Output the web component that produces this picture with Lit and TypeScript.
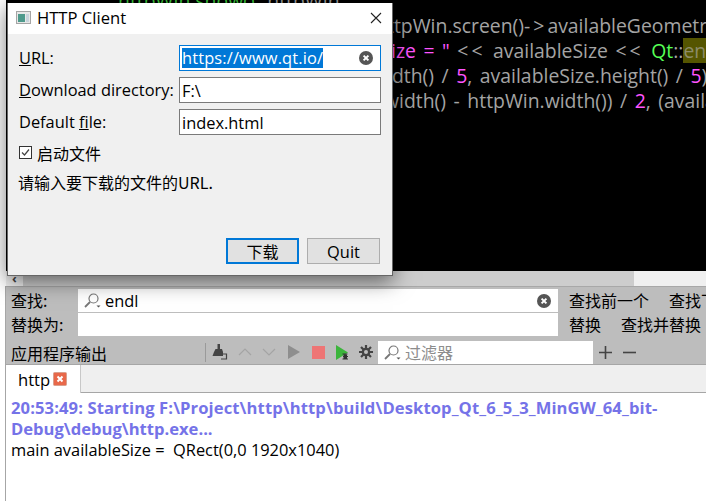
import { LitElement, html, css } from "lit";
import { customElement } from "lit/decorators.js";

const clearIcon = (size: number) => html`<svg width=${size} height=${size} viewBox="0 0 14 14"><circle cx="7" cy="7" r="7" fill="#555"/><path d="M4.6 4.6l4.8 4.8M9.4 4.6l-4.8 4.8" stroke="#fff" stroke-width="2"/></svg>`;
const searchIcon = html`<svg width="17" height="15" viewBox="0 0 17 15" fill="none"><circle cx="9.500" cy="5.500" r="4.500" stroke="#777" stroke-width="1.200"/><path d="M6 9L1 14" stroke="#777" stroke-width="1.800"/><path d="M12.500 12.500h4l-2 2z" fill="#555"/></svg>`;

@customElement("app-root")
export class AppRoot extends LitElement {
  static styles = css`
    :host { display: block; width: 706px; height: 501px; position: relative; overflow: hidden; background: #fff;
      font-family: "Open Sans", "Noto Sans CJK SC", sans-serif; font-size: 16.4px; color: #000; }
    .main { margin-left: 6px; display: flex; flex-direction: column; height: 501px; }
    .cjk { font-family: "Noto Sans CJK SC", sans-serif; font-size: 16px; }

    .editor { height: 271px; flex: none; background: #000; overflow: hidden; color: #a4a4a4; font-size: 19.4px; white-space: nowrap; word-spacing: 2.5px; }
    .line { height: 25px; line-height: 25px; }
    .l0 { margin-top: -12px; padding-left: 112px; }
    .l0 b { color: #3fd03f; font-weight: 400; }
    .l1 { padding-left: 381px; }
    .l2 { padding-left: 385px; }
    .l3 { padding-left: 381px; }
    .l4 { padding-left: 378px; }
    .op { letter-spacing: 3px; }
    .pink { color: #ff55ff; }
    .green { color: #55ff55; }
    .hl { background: #555500; color: #8c8c6a; display: inline-block; height: 25px; }

    .hscroll { height: 15px; flex: none; background: #cdcdcd; display: flex; }
    .hscroll .btn { width: 17px; background: #f0f0f0; font-size: 13px; line-height: 14px; text-align: center; font-weight: 700; color: #444; }
    .hscroll .rest { margin-left: auto; width: 72px; background: #f0f0f0; }

    .find { height: 54px; flex: none; background: #bdbdbd; border-top: 1px solid #a8a8a8; display: grid; grid-template-columns: 72px 480px 1fr; grid-template-rows: 24px 24px; padding-top: 2px; box-sizing: border-box; }
    .lbl { padding-left: 5px; line-height: 23px; white-space: nowrap; }
    .finput { background: #fff; border-bottom: 1px solid #bdbdbd; display: flex; align-items: center; padding: 0 6px; gap: 4px; }
    .finput .clr { margin-left: auto; margin-right: 1px; display: flex; }
    .ops { display: flex; line-height: 23px; padding-left: 11px; gap: 20px; white-space: nowrap; overflow: hidden; }

    .toolbar { height: 25px; flex: none; background: #bdbdbd; border-bottom: 1px solid #a6a6a6; box-sizing: border-box; display: flex; align-items: center; }
    .toolbar .title { width: 199px; padding: 1px 0 0 5px; box-sizing: border-box; white-space: nowrap; }
    .sep { width: 1px; height: 19px; background: #9a9a9a; }
    .tbi { display: flex; width: 24.5px; justify-content: center; align-items: center; flex: none; }
    .tbi.first { margin-left: 2px; }
    .tbi.gear { width: 22px; margin-right: 1px; }
    .filter { background: #fff; width: 215px; height: 23px; display: flex; align-items: center; gap: 4px; padding-left: 6px; box-sizing: border-box; color: #8d8d8d; flex: none; }
    .pm { display: flex; gap: 11px; margin-left: 6px; }

    .tabs { height: 28px; flex: none; background: #efefef; border-bottom: 1px solid #a6a6a6; box-sizing: border-box; display: flex; }
    .tab { width: 75px; height: 28px; background: #fff; border-right: 1px solid #c8c8c8; box-sizing: border-box; display: flex; align-items: center; padding-left: 12px; gap: 3px; font-size: 16.6px; }

    .out { flex: 1; padding: 4px 0 0 5px; line-height: 21px; font-size: 16.4px; white-space: pre; }
    .out .sys { color: #7573e8; font-weight: 700; font-size: 16.6px; }
    .out .wide { letter-spacing: .1px; }

    .rail { position: absolute; left: 5px; top: 286px; bottom: 0; width: 1px; background: #a6a6a6; }

    .win { position: absolute; left: 7px; top: 3px; width: 386px; height: 273px; box-sizing: border-box; background: #f0f0f0; border: 1px solid #666; border-top: 0; box-shadow: 0 5px 20px rgba(0,0,0,.55); display: flex; flex-direction: column; }
    .tb { height: 31px; padding-bottom: 2px; box-sizing: border-box; background: #fff; flex: none; display: flex; align-items: center; padding-left: 8px; gap: 6px; font-size: 16.6px; }
    .tb .x { margin-left: auto; margin-right: 10px; display: flex; }
    .form { padding: 11px 10px 0 11px; display: grid; grid-template-columns: 160px 202px; row-gap: 6px; }
    .form label { line-height: 26px; white-space: nowrap; }
    .field { height: 26px; box-sizing: border-box; background: #fff; border: 1px solid #7a7a7a; display: flex; align-items: center; padding-left: 2px; }
    .field.focus { border-color: #0078d7; padding-right: 7px; }
    .sel { background: #0078d7; color: #fff; line-height: 20px; height: 20px; letter-spacing: .15px; }
    .field .clr { margin-left: auto; display: flex; }
    .check { display: flex; align-items: center; gap: 5px; margin: 9px 0 0 11px; height: 17px; }
    .box { width: 13px; height: 13px; border: 1px solid #333; box-sizing: border-box; background: #fff; display: flex; }
    .hint { margin: 10px 0 0 10px; line-height: 22px; }
    .btns { margin-top: auto; display: flex; justify-content: flex-end; gap: 8px; padding: 0 12px 11px 0; }
    .b { width: 73px; height: 26px; box-sizing: border-box; background: #e1e1e1; border: 1px solid #adadad; display: flex; align-items: center; justify-content: center; }
    .b.def { border: 2px solid #0078d7; }
  `;

  render() {
    return html`
      <div class="main">
        <div class="editor">
          <div class="line l0"><b>httpWin.show();</b> httpWin</div>
          <div class="line l1">ttpWin.screen()<span class="op">-&gt;</span>availableGeometry().size();</div>
          <div class="line l2"><span class="pink">ize = "</span> <span class="op">&lt;&lt;</span> availableSize <span class="op">&lt;&lt;</span> <span class="green">Qt</span>::<span class="hl">endl</span>;</div>
          <div class="line l3">idth() / <span class="pink">5</span>, availableSize.height() / <span class="pink">5</span>);</div>
          <div class="line l4">width() - httpWin.width()) / <span class="pink">2</span>, (availableSize</div>
        </div>
        <div class="hscroll"><div class="btn">‹</div><div class="rest"></div></div>
        <div class="find">
          <div class="lbl cjk">查找:</div>
          <div class="finput">${searchIcon}<span>endl</span><span class="clr">${clearIcon(14)}</span></div>
          <div class="ops cjk"><span>查找前一个</span><span>查找下一个</span></div>
          <div class="lbl cjk">替换为:</div>
          <div class="finput"></div>
          <div class="ops cjk"><span>替换</span><span>查找并替换</span></div>
        </div>
        <div class="toolbar">
          <div class="title cjk">应用程序输出</div>
          <div class="sep"></div>
          <div class="tbi first"><svg width="16" height="16" viewBox="0 0 16 16"><path d="M5.500 0h2.500v5H5.500z" fill="#444"/><path d="M3.500 5h6.500l1 3v4H0.500l1.500-4z" fill="#444"/><path d="M11 10h3.500v5H9" fill="none" stroke="#444" stroke-width="1.200"/></svg></div>
          <div class="tbi"><svg width="14" height="8" viewBox="0 0 14 8"><path d="M1 7l6-6 6 6" fill="none" stroke="#a4a4a4" stroke-width="1.200"/></svg></div>
          <div class="tbi"><svg width="14" height="8" viewBox="0 0 14 8"><path d="M1 1l6 6 6-6" fill="none" stroke="#a4a4a4" stroke-width="1.200"/></svg></div>
          <div class="tbi"><svg width="12" height="14" viewBox="0 0 12 14"><path d="M0 0l12 7-12 7z" fill="#8e8e8e"/></svg></div>
          <div class="tbi"><svg width="13" height="13"><rect width="13" height="13" fill="#ee7575"/></svg></div>
          <div class="tbi"><svg width="13" height="15" viewBox="0 0 13 15"><path d="M0 0l12 7.500-12 7.500z" fill="#3cb53c"/><path d="M6.500 9h5M7 11.500h5M6.500 14h5.500M9 8.500v6" stroke="#333" stroke-width="1.100"/><rect x="7.500" y="9.500" width="3.500" height="4.500" fill="#333"/></svg></div>
          <div class="tbi gear"><svg width="14" height="14" viewBox="0 0 14 14"><g stroke="#444" stroke-width="2.200"><path d="M7 0v14M0 7h14M2 2l10 10M12 2L2 12"/></g><circle cx="7" cy="7" r="4.300" fill="#444"/><circle cx="7" cy="7" r="2" fill="#bdbdbd"/></svg></div>
          <div class="filter">${searchIcon}<span class="cjk">过滤器</span></div>
          <div class="pm"><svg width="13" height="13"><path d="M6.500 0v13M0 6.500h13" stroke="#444" stroke-width="1.600"/></svg><svg width="13" height="13"><path d="M0 6.500h13" stroke="#444" stroke-width="1.600"/></svg></div>
        </div>
        <div class="tabs">
          <div class="tab">http <svg width="14" height="14" viewBox="0 0 14 14"><rect x=".5" y=".5" width="13" height="13" rx="1" fill="#e8684a" stroke="#d9a08e"/><path d="M4.500 4.500l5 5M9.500 4.500l-5 5" stroke="#fff" stroke-width="2"/></svg></div>
        </div>
        <div class="out"><div class="sys wide">20:53:49: Starting F:\\Project\\http\\http\\build\\Desktop_Qt_6_5_3_MinGW_64_bit-</div><div class="sys">Debug\\debug\\http.exe...</div><div>main availableSize =  QRect(0,0 1920x1040)</div></div>
      </div>
      <div class="rail"></div>
      <div class="win">
        <div class="tb">
          <svg width="15" height="13" viewBox="0 0 15 13"><rect x=".5" y=".5" width="14" height="12" fill="#e8e8e8" stroke="#a5a5a5"/><rect x="2" y="3" width="7" height="8" fill="#4f9a8c"/><rect x="10" y="3" width="3" height="8" fill="#c8d4dc"/></svg>
          <span>HTTP Client</span>
          <span class="x"><svg width="12" height="12"><path d="M1 1l10 10M11 1L1 11" stroke="#222" stroke-width="1.100"/></svg></span>
        </div>
        <div class="form">
          <label><u>U</u>RL:</label>
          <div class="field focus"><span class="sel">https://www.qt.io/</span><span class="clr">${clearIcon(14)}</span></div>
          <label><u>D</u>ownload directory:</label>
          <div class="field">F:\\</div>
          <label>Default <u>f</u>ile:</label>
          <div class="field">index.html</div>
        </div>
        <div class="check"><span class="box"><svg width="11" height="11"><path d="M2 5.500l2.500 2.500L9 2.500" fill="none" stroke="#444" stroke-width="1.200"/></svg></span><span class="cjk">启动文件</span></div>
        <div class="hint"><span class="cjk">请输入要下载的文件的URL.</span></div>
        <div class="btns"><div class="b def cjk">下载</div><div class="b">Quit</div></div>
      </div>
    `;
  }
}
